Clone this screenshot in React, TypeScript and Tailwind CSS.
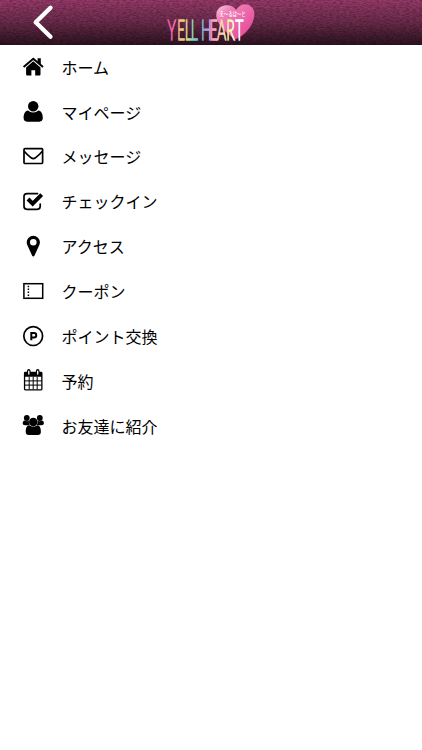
import React from 'react';

const HomeIcon = () => (
  <>
    <path d="M1.600 11 11.300 2.700 21 11" fill="none" stroke="#000" strokeWidth="2" />
    <path d="M15.600 2.200h3.200v7l-3.200-2.700z" />
    <path d="M4.100 11.400 11.300 5.300l7.200 6.100v7.200a.8.8 0 0 1-.8.8h-4.500v-5.100H9.400v5.100H4.900a.8.8 0 0 1-.8-.8z" />
  </>
);

const UserIcon = () => (
  <>
    <circle cx="11.200" cy="5.200" r="5.200" />
    <path d="M6.100 9.400c1.300 1.300 3 2 5.100 2s3.800-.7 5.100-2c3.200.2 4.500 3.600 4.500 7.700 0 2.200-1.400 3.600-3.300 3.600H5c-2 0-3.400-1.400-3.400-3.600 0-4.100 1.300-7.500 4.500-7.700z" />
  </>
);

const MailIcon = () => (
  <g fill="none" stroke="#000" strokeWidth="1.700" strokeLinejoin="round">
    <rect x="2" y="2.700" width="18.600" height="14.800" rx="0.900" />
    <path d="M2.200 5.200c2 2.500 4.600 4.700 7 6.600 1.500 1.100 2.700 1.100 4.200 0 2.400-1.900 5-4.100 7-6.600" />
  </g>
);

const CheckIcon = () => (
  <>
    <path
      d="M15.500 2.600H5a3 3 0 0 0-3 3v9.700a3 3 0 0 0 3 3h10.200a3 3 0 0 0 3-3v-2.200"
      fill="none"
      stroke="#000"
      strokeWidth="1.700"
      strokeLinecap="round"
    />
    <path d="m6 8 4.700 4.700 9-9" fill="none" stroke="#000" strokeWidth="4" />
  </>
);

const PinIcon = () => (
  <path
    fillRule="evenodd"
    d="M11.300-.3a6.600 6.600 0 0 1 6.600 6.600c0 1.200-.3 2.200-.8 3.200l-4.700 10.200c-.4 1.100-1.800 1.100-2.200 0L5.500 9.500c-.5-1-.8-2-.8-3.200A6.600 6.600 0 0 1 11.300-.3zm0 3.300a3.300 3.300 0 1 0 0 6.600 3.300 3.300 0 0 0 0-6.600z"
  />
);

const CouponIcon = () => (
  <g fill="none" stroke="#000" strokeWidth="1.500">
    <rect x="1.900" y="2.700" width="18.800" height="14.600" />
    <path d="M6.400 4.700v12" strokeDasharray="1.500 1.400" />
  </g>
);

const PointIcon = () => (
  <g fill="none" stroke="#000">
    <circle cx="11.200" cy="10.100" r="9.400" strokeWidth="1.700" />
    <path d="M9.300 14.200V6.900h2.700a2.250 2.250 0 0 1 0 4.500H9.300" strokeWidth="2" />
  </g>
);

const CalendarIcon = () => (
  <>
    <path
      fillRule="evenodd"
      d="M3.300 1.800h15.800a1.400 1.400 0 0 1 1.400 1.400v15.800a1.400 1.400 0 0 1-1.400 1.400H3.300a1.400 1.400 0 0 1-1.400-1.400V3.200a1.400 1.400 0 0 1 1.400-1.400zM3.200 6.800v12.400h16V6.800z"
    />
    <path
      d="M7.200 6.800v12.600M11.200 6.800v12.600M15.200 6.800v12.600M3 10.900h16.500M3 15.100h16.500"
      stroke="#000"
      strokeWidth="1"
    />
    <path d="M6.800.9v3M15.700.9v3" stroke="#000" strokeWidth="3.600" strokeLinecap="round" />
    <path d="M6.800 1.100v2.900M15.700 1.100v2.900" stroke="#fff" strokeWidth="1.300" strokeLinecap="round" />
  </>
);

const FriendsIcon = () => (
  <>
    <circle cx="4.800" cy="3" r="2.900" />
    <circle cx="17.800" cy="3" r="2.900" />
    <path d="M3 5.600c1.200.8 2.700.8 3.900 0-.2 1.900.1 3.300.9 4.600H3.200c-1.600 0-2.500-.7-2.500-2 0-1.300.8-2.700 2.300-2.600zM19.600 5.600c-1.200.8-2.700.8-3.900 0 .2 1.900-.1 3.300-.9 4.600h4.600c1.600 0 2.500-.7 2.500-2 0-1.300-.8-2.700-2.300-2.600z" />
    <circle cx="11.300" cy="7" r="4.300" />
    <path d="M7.400 10.300c2.200 1.700 5.600 1.700 7.800 0 2.800.1 3.700 3.300 3.700 6.400 0 2.100-1.200 3.200-3 3.200H6.700c-1.800 0-3-1.100-3-3.200 0-3.100.9-6.300 3.700-6.400z" />
  </>
);

const menuItems = [
  { label: 'ホーム', icon: HomeIcon },
  { label: 'マイページ', icon: UserIcon },
  { label: 'メッセージ', icon: MailIcon },
  { label: 'チェックイン', icon: CheckIcon },
  { label: 'アクセス', icon: PinIcon },
  { label: 'クーポン', icon: CouponIcon },
  { label: 'ポイント交換', icon: PointIcon },
  { label: '予約', icon: CalendarIcon },
  { label: 'お友達に紹介', icon: FriendsIcon },
];

function Logo() {
  return (
    <svg className="h-[45px] w-[120px]" viewBox="0 0 120 45">
      <defs>
        <linearGradient id="heart" x1="0" y1="0" x2="1" y2="1">
          <stop offset="0" stopColor="#fbd3e7" />
          <stop offset="0.25" stopColor="#f07fb8" />
          <stop offset="1" stopColor="#e23d92" />
        </linearGradient>
        <linearGradient id="rainbow" gradientUnits="userSpaceOnUse" x1="34" y1="0" x2="192" y2="0">
          <stop offset="0" stopColor="#e8509f" />
          <stop offset="0.11" stopColor="#ee6fa5" />
          <stop offset="0.17" stopColor="#f3c27a" />
          <stop offset="0.26" stopColor="#c6dc8c" />
          <stop offset="0.36" stopColor="#6ccdd0" />
          <stop offset="0.47" stopColor="#86a8e2" />
          <stop offset="0.57" stopColor="#f09ac8" />
          <stop offset="0.68" stopColor="#f8cfae" />
          <stop offset="0.8" stopColor="#e6f5a8" />
          <stop offset="0.87" stopColor="#ffffff" />
        </linearGradient>
      </defs>
      <path
        d="M86 10C82 3 69 4 66.500 12.500 64.500 22 74 31 85 39.500 95 36 104 25 104.500 14 104 3 91 1 86 10z"
        fill="url(#heart)"
      />
      <text
        x="69.500"
        y="16"
        textLength="26"
        lengthAdjust="spacingAndGlyphs"
        fill="#fff"
        className="font-['Noto_Sans_CJK_JP',sans-serif] text-[6px] font-medium"
      >
        え〜るは〜と
      </text>
      <text
        transform="scale(0.5 1)"
        x="35 54 69.500 81.500 95 102 119 134 152.500 170.500"
        y="39.700"
        fill="url(#rainbow)"
        stroke="url(#rainbow)"
        strokeWidth="1.300"
        className="font-['Lato',sans-serif] text-[28px] font-light"
      >
        YELL HEART
      </text>
    </svg>
  );
}

function Header() {
  return (
    <header className="relative flex h-[45px] items-center justify-center bg-linear-to-b from-[#9a3b6b] via-[#6c2c4c] to-[#2e1321]">
      <svg className="absolute inset-0 h-full w-full opacity-25">
        <filter id="grain">
          <feTurbulence type="fractalNoise" baseFrequency="0.3 0.8" numOctaves="2" seed="4" />
          <feColorMatrix values="0 0 0 0 0  0 0 0 0 0  0 0 0 0 0  2.500 0 0 0 -0.850" />
        </filter>
        <rect width="100%" height="100%" filter="url(#grain)" />
      </svg>
      <button aria-label="戻る" className="absolute left-8 top-1">
        <svg
          className="h-9 w-6"
          viewBox="0 0 24 36"
          fill="none"
          stroke="#fff"
          strokeWidth="4.300"
          strokeLinecap="round"
          strokeLinejoin="round"
        >
          <path d="M18.500 3.700 3.700 18.300l14.800 14.500" />
        </svg>
      </button>
      <div className="relative -ml-0.5">
        <Logo />
      </div>
    </header>
  );
}

export default function App() {
  return (
    <div className="min-h-screen bg-white font-['Noto_Sans_CJK_JP',sans-serif] text-black">
      <Header />
      <ul>
        {menuItems.map(({ label, icon: Icon }) => (
          <li key={label} className="flex h-[44.870px] items-center gap-[17.500px] pl-[22px]">
            <svg className="size-[22px] shrink-0 overflow-visible" viewBox="0 0 22 22">
              <Icon />
            </svg>
            <span className="pb-[1.500px] text-base leading-none">{label}</span>
          </li>
        ))}
      </ul>
    </div>
  );
}
